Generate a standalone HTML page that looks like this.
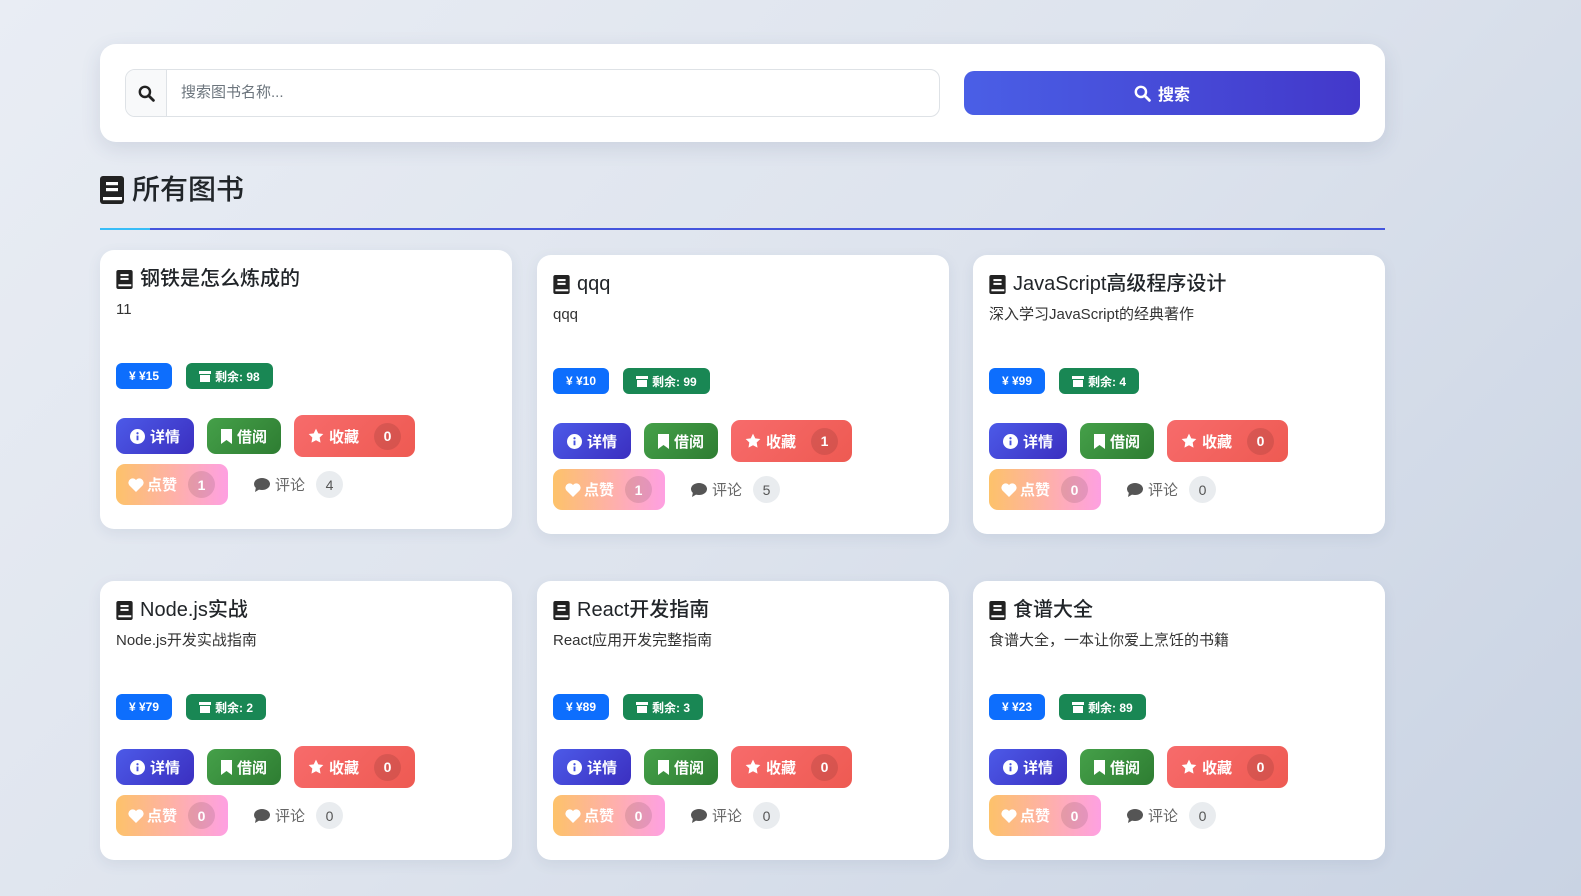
<!DOCTYPE html>
<html><head><meta charset="utf-8"><style>
*{box-sizing:border-box;margin:0;padding:0}
body{width:1581px;height:896px;overflow:hidden;background:linear-gradient(135deg,#e9edf4 0%,#dde3ed 50%,#c9d3e3 100%);font-family:"Liberation Sans","Noto Sans CJK SC",sans-serif;color:#212529;position:relative}
.search{position:absolute;left:100px;top:44px;width:1285px;height:98px;background:#fff;border-radius:16px;box-shadow:0 6px 20px rgba(40,60,100,.12)}
.inp{position:absolute;left:25px;top:25px;width:815px;height:48px;border:1px solid #dee2e6;border-radius:10px;display:flex;overflow:hidden}
.inp .ic{width:41px;background:#f8f9fa;border-right:1px solid #dee2e6;display:flex;align-items:center;justify-content:center}
.inp .ph{padding-left:14px;line-height:46px;font-size:15px;color:#6c757d}
.sbtn{position:absolute;left:864px;top:27px;width:396px;height:44px;border-radius:10px;background:linear-gradient(90deg,#4a5fe6,#4338ca);color:#fff;font-weight:bold;font-size:16px;display:flex;align-items:center;justify-content:center;gap:7px}
h2{position:absolute;left:100px;top:171px;font-size:28px;font-weight:500;display:flex;align-items:center;gap:8px;line-height:38px}
.line{position:absolute;left:100px;top:228px;width:1285px;height:2px;background:linear-gradient(90deg,#38bdf8 0,#38bdf8 50px,#4455dd 50px)}
.card{position:absolute;width:412px;height:279px;background:#fff;border-radius:14px;box-shadow:0 4px 14px rgba(40,60,100,.08);padding:16px}
.t{display:flex;align-items:center;gap:7px;font-size:20px;font-weight:500;line-height:26px;white-space:nowrap}
.d{font-size:15px;line-height:20px;margin-top:8px;color:#333;height:20px;white-space:nowrap}
.bd{display:flex;gap:14px;margin-top:43px}
.b{height:26px;border-radius:6px;color:#fff;font-size:12px;font-weight:bold;display:flex;align-items:center;justify-content:center;gap:4px;padding:0 13px;white-space:nowrap}
.pr{background:#0d6efd}.st{background:#198754}
.r1{display:flex;gap:13px;margin-top:26px;align-items:center}
.btn{height:36px;border-radius:9px;color:#fff;font-size:15px;font-weight:bold;display:flex;align-items:center;gap:5px;padding:0 14px;white-space:nowrap;flex:none}
.det{background:linear-gradient(135deg,#4c5ae8,#3b2fc0)}
.bor{background:linear-gradient(135deg,#45a049,#2e7d32)}
.fav{height:42px;background:linear-gradient(135deg,#f76b6b,#ee5a52)}
.cnt{width:27px;height:27px;border-radius:50%;background:rgba(0,0,0,.1);display:flex;align-items:center;justify-content:center;font-size:14px;margin-left:10px;flex:none}
.r2{display:flex;align-items:center;margin-top:7px}
.like{height:41px;width:112px;padding:0 12px;gap:3px;background:linear-gradient(90deg,#fdc26a,#fea0e2)}
.like .cnt{margin-left:8px}
.cm{margin-left:26px;display:flex;align-items:center;gap:5px;color:#666;font-size:15px;white-space:nowrap}
.cm .cnt{background:#e9ecef;color:#555;margin-left:6px}
</style></head><body>
<div class="search">
 <div class="inp"><div class="ic"><svg width="17" height="17" viewBox="0 0 16 16"><circle cx="6.5" cy="6.5" r="4.8" fill="none" stroke="#222" stroke-width="2.3"/><path d="M10 10l4.5 4.5" stroke="#222" stroke-width="2.6" stroke-linecap="round"/></svg></div><div class="ph">搜索图书名称...</div></div>
 <div class="sbtn"><svg width="17" height="17" viewBox="0 0 16 16"><circle cx="6.5" cy="6.5" r="4.8" fill="none" stroke="#fff" stroke-width="2.3"/><path d="M10 10l4.5 4.5" stroke="#fff" stroke-width="2.6" stroke-linecap="round"/></svg>搜索</div>
</div>
<h2><svg width="24" height="28" viewBox="0 0 12 14"><rect x="0" y="0" width="12" height="14" rx="1.5" fill="#222"/><rect x="3" y="3" width="6" height="1.6" fill="#fff"/><rect x="3" y="6" width="6" height="1.6" fill="#fff"/><rect x="1.5" y="10.5" width="9.5" height="1.6" fill="#fff"/></svg>所有图书</h2>
<div class="line"></div>
<div id="cards"></div>
<script>
const B='<svg width="17" height="19" viewBox="0 0 12 14"><rect width="12" height="14" rx="1.5" fill="#222"/><rect x="3" y="3" width="6" height="1.5" fill="#fff"/><rect x="3" y="5.8" width="6" height="1.5" fill="#fff"/><rect x="1.5" y="10.5" width="9.5" height="1.5" fill="#fff"/></svg>';
const data=[[100,250,'钢铁是怎么炼成的','11','15','98',0,1,4],[537,255,'qqq','qqq','10','99',1,1,5],[973,255,'JavaScript高级程序设计','深入学习JavaScript的经典著作','99','4',0,0,0],[100,581,'Node.js实战','Node.js开发实战指南','79','2',0,0,0],[537,581,'React开发指南','React应用开发完整指南','89','3',0,0,0],[973,581,'食谱大全','食谱大全，一本让你爱上烹饪的书籍','23','89',0,0,0]];
let h='';
for(const [x,y,t,d,p,s,f,l,c] of data){
h+=`<div class="card" style="left:${x}px;top:${y}px"><div class="t">${B}${t}</div><div class="d">${d}</div>
<div class="bd"><div class="b pr">¥ ¥${p}</div><div class="b st"><svg width="12" height="11" viewBox="0 0 12 11"><rect width="12" height="3" fill="#fff"/><rect x="1" y="4" width="10" height="7" fill="#fff"/></svg>剩余: ${s}</div></div>
<div class="r1"><div class="btn det"><svg width="15" height="15" viewBox="0 0 16 16"><circle cx="8" cy="8" r="8" fill="#fff"/><circle cx="8" cy="4.5" r="1.2" fill="#4450dd"/><rect x="7" y="7" width="2" height="5" fill="#4450dd"/></svg>详情</div>
<div class="btn bor"><svg width="11" height="15" viewBox="0 0 11 15"><path d="M0 0h11v15l-5.5-4L0 15z" fill="#fff"/></svg>借阅</div>
<div class="btn fav"><svg width="16" height="16" viewBox="0 0 24 24"><path d="M12 1l3.4 7 7.6 1-5.5 5.3 1.3 7.7L12 18.3 5.2 22l1.3-7.7L1 9l7.6-1z" fill="#fff"/></svg>收藏<div class="cnt">${f}</div></div></div>
<div class="r2"><div class="btn like"><svg width="16" height="14" viewBox="0 0 24 21"><path d="M12 21L2 11A6 6 0 0112 3a6 6 0 0110 8z" fill="#fff"/></svg>点赞<div class="cnt">${l}</div></div>
<div class="cm"><svg width="16" height="14" viewBox="0 0 16 14"><ellipse cx="8" cy="6" rx="8" ry="6" fill="#555"/><path d="M2 9l-1 5 5-3z" fill="#555"/></svg>评论<div class="cnt">${c}</div></div></div></div>`;
}
document.getElementById('cards').innerHTML=h;
</script>
</body></html>
